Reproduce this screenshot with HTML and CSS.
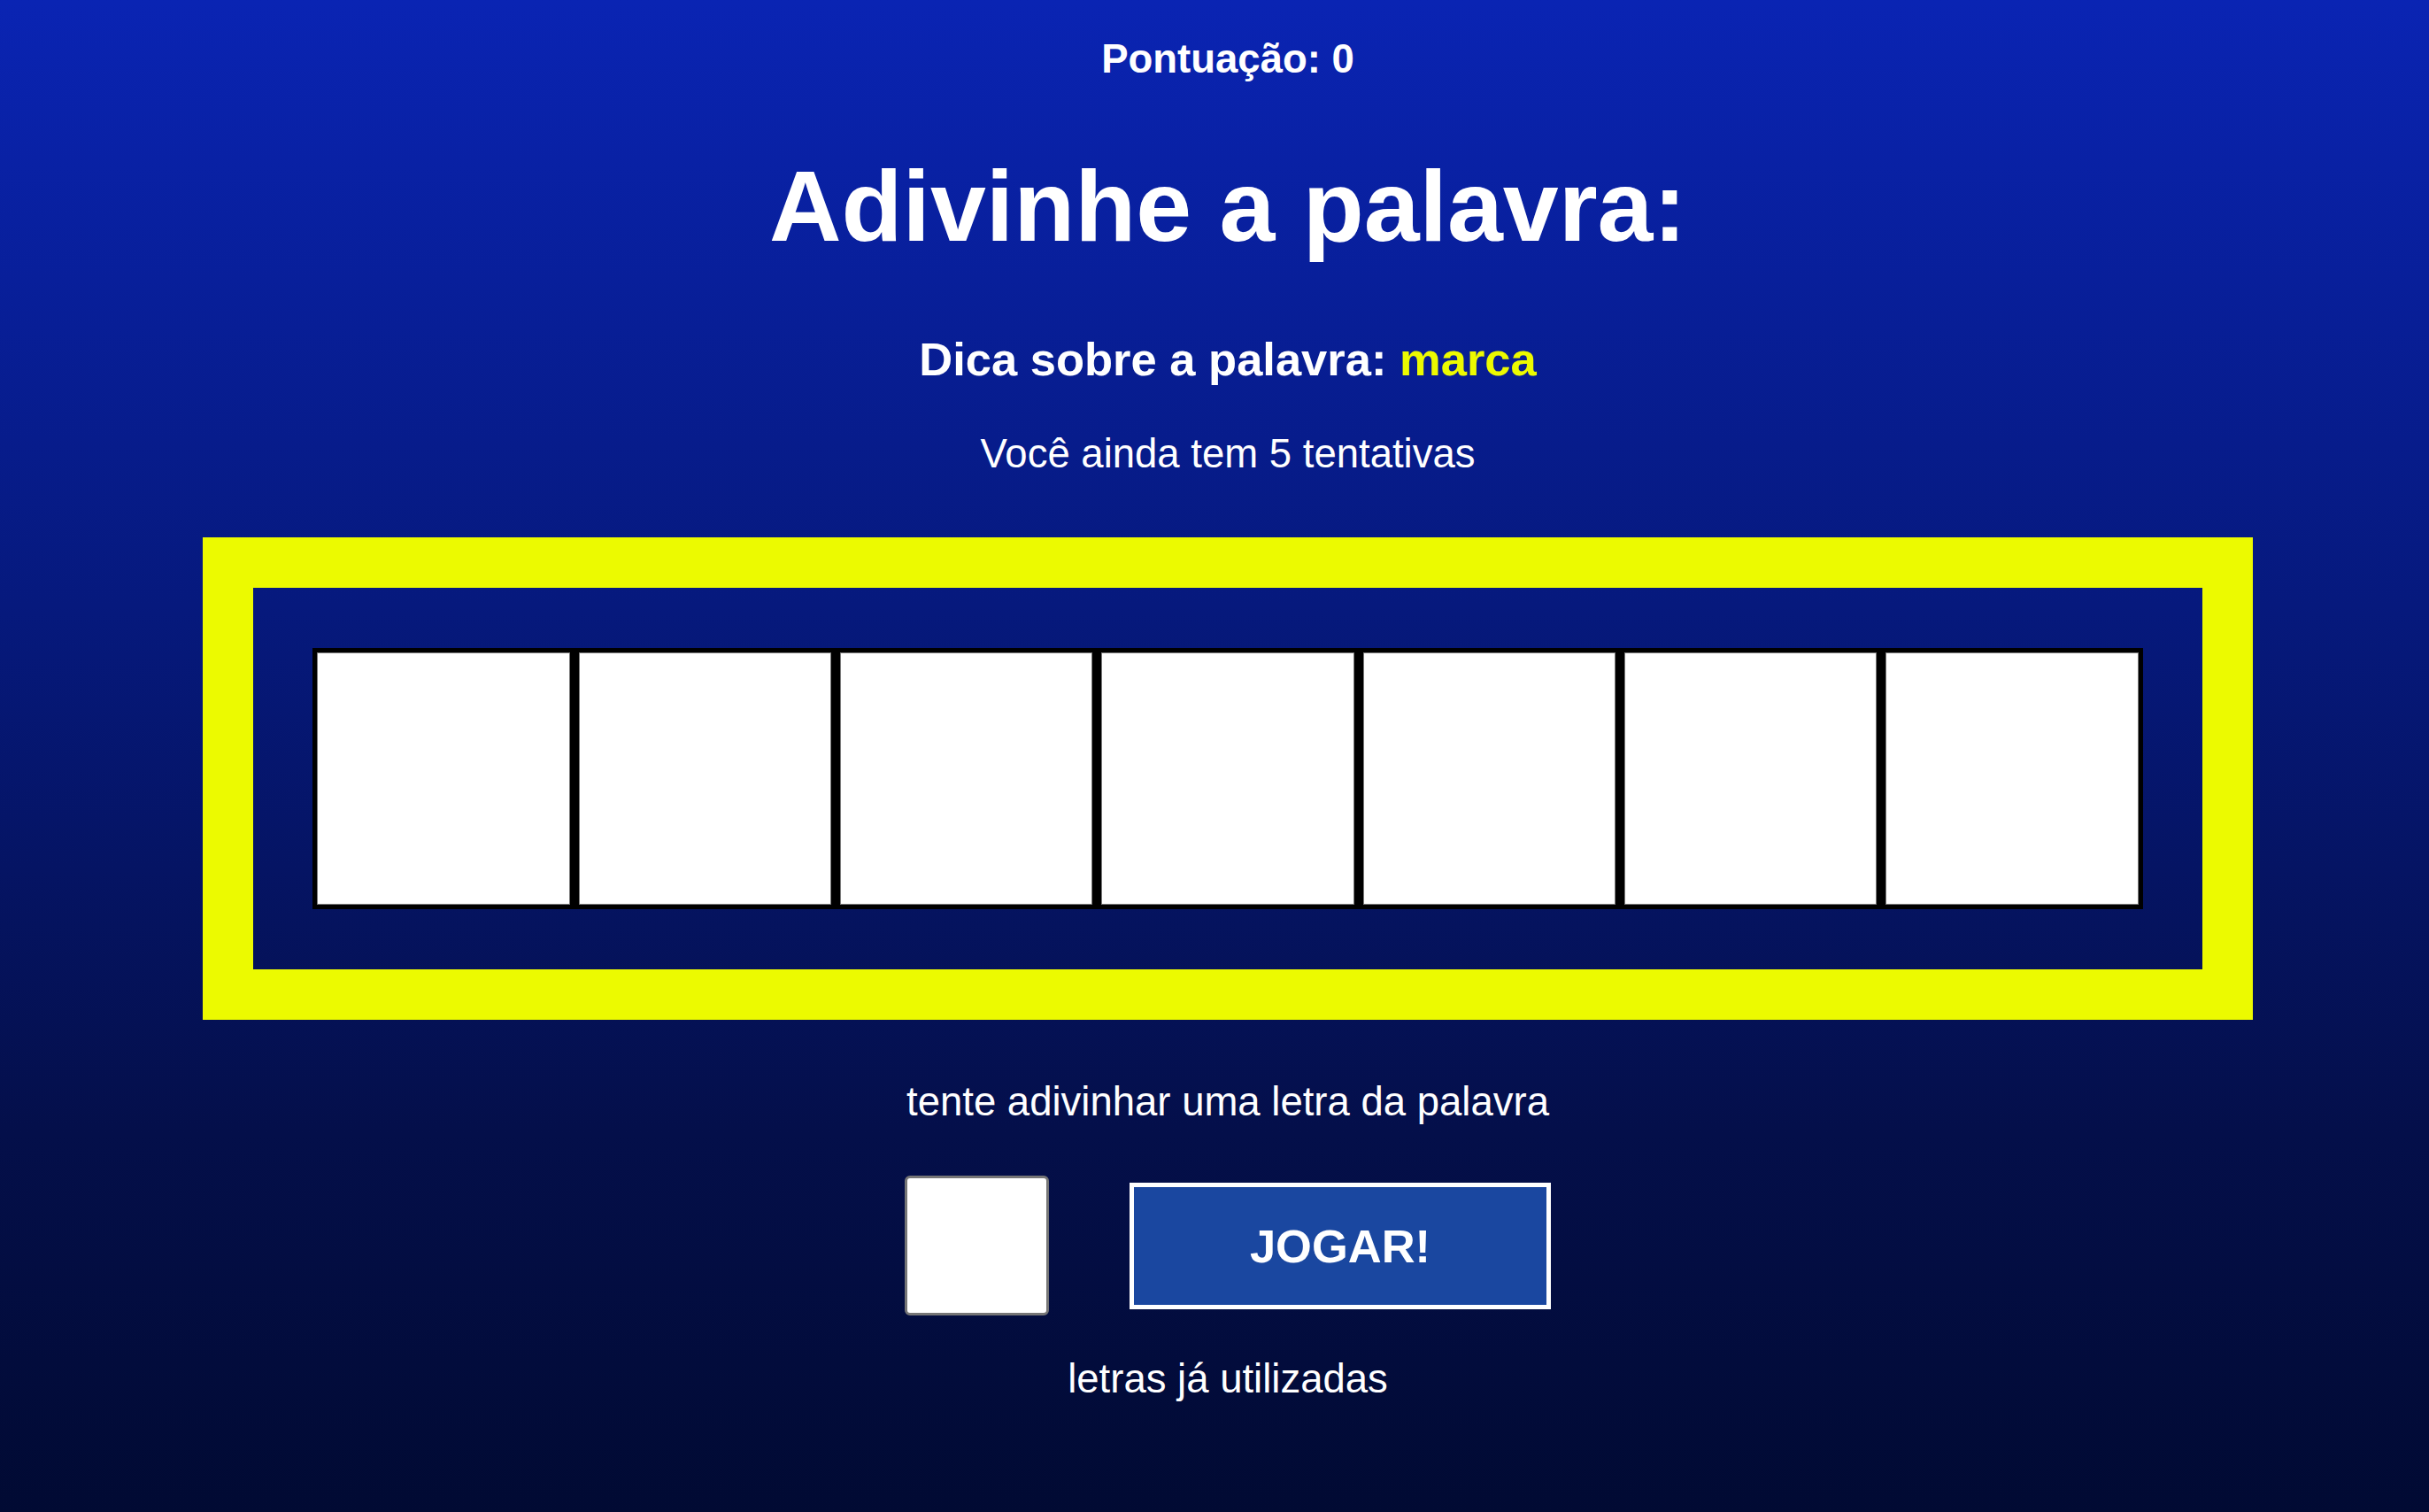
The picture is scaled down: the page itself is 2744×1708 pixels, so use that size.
FILE: index.html
```html
<!DOCTYPE html>
<html lang="pt-BR">
<head>
<meta charset="utf-8">
<title>Adivinhe a palavra</title>
<link rel="stylesheet" href="styles.css">
</head>
<body>
<main class="game">
  <p class="score">Pontuação: 0</p>
  <h1 class="title">Adivinhe a palavra:</h1>
  <p class="hint">Dica sobre a palavra: <span class="hint-word">marca</span></p>
  <p class="tries">Você ainda tem 5 tentativas</p>
  <section class="board">
    <div class="tiles">
      <div class="tile"></div>
      <div class="tile"></div>
      <div class="tile"></div>
      <div class="tile"></div>
      <div class="tile"></div>
      <div class="tile"></div>
      <div class="tile"></div>
    </div>
  </section>
  <p class="prompt">tente adivinhar uma letra da palavra</p>
  <div class="controls">
    <input class="letter" type="text" maxlength="1">
    <button class="play" type="button">JOGAR!</button>
  </div>
  <p class="used">letras já utilizadas</p>
</main>
</body>
</html>
```

FILE: styles.css
```css
html, body {
  margin: 0;
  padding: 0;
}

body {
  min-height: 1708px;
  background: linear-gradient(to bottom, #0a24b3 0%, #06197d 40%, #040f4a 75%, #010a33 100%);
  font-family: "Liberation Sans", Arial, sans-serif;
  color: #ffffff;
}

.game {
  box-sizing: border-box;
  min-height: 1708px;
  padding: 41px 0 0 30px;
  display: flex;
  flex-direction: column;
  align-items: center;
  text-align: center;
}

.score {
  margin: 0;
  font-size: 45.5px;
  font-weight: bold;
}

.title {
  margin: 75px 0 0;
  font-size: 113px;
  font-weight: bold;
}

.hint {
  margin: 77px 0 0;
  font-size: 52.5px;
  font-weight: bold;
}

.hint-word {
  color: #ecfa00;
}

.tries {
  margin: 51px 0 0;
  font-size: 45.5px;
}

.board {
  box-sizing: border-box;
  width: 2316px;
  margin-top: 68px;
  border: 57px solid #ecfa00;
  padding: 68px 0;
  display: flex;
  justify-content: center;
}

.tiles {
  display: flex;
}

.tile {
  box-sizing: border-box;
  width: 295.3px;
  height: 295px;
  background: #ffffff;
  border: 5px solid #000000;
  box-shadow: inset 0 0 0 1px #7a7a7a;
}

.prompt {
  margin: 67px 0 0;
  font-size: 45.5px;
}

.controls {
  margin-top: 57px;
  display: flex;
  align-items: center;
  gap: 91px;
}

.letter {
  box-sizing: border-box;
  width: 163px;
  height: 158px;
  margin: 0;
  padding: 0;
  border: 3px solid #767676;
  border-radius: 6px;
  background: #ffffff;
  font-family: "Liberation Sans", Arial, sans-serif;
  font-size: 60px;
  text-align: center;
}

.play {
  box-sizing: border-box;
  width: 476px;
  height: 143px;
  margin: 0;
  border: 5px solid #ffffff;
  background: #1a47a0;
  color: #ffffff;
  font-family: "Liberation Sans", Arial, sans-serif;
  font-size: 52.5px;
  font-weight: bold;
  cursor: pointer;
}

.used {
  margin: 46px 0 0;
  font-size: 45.5px;
}
```
